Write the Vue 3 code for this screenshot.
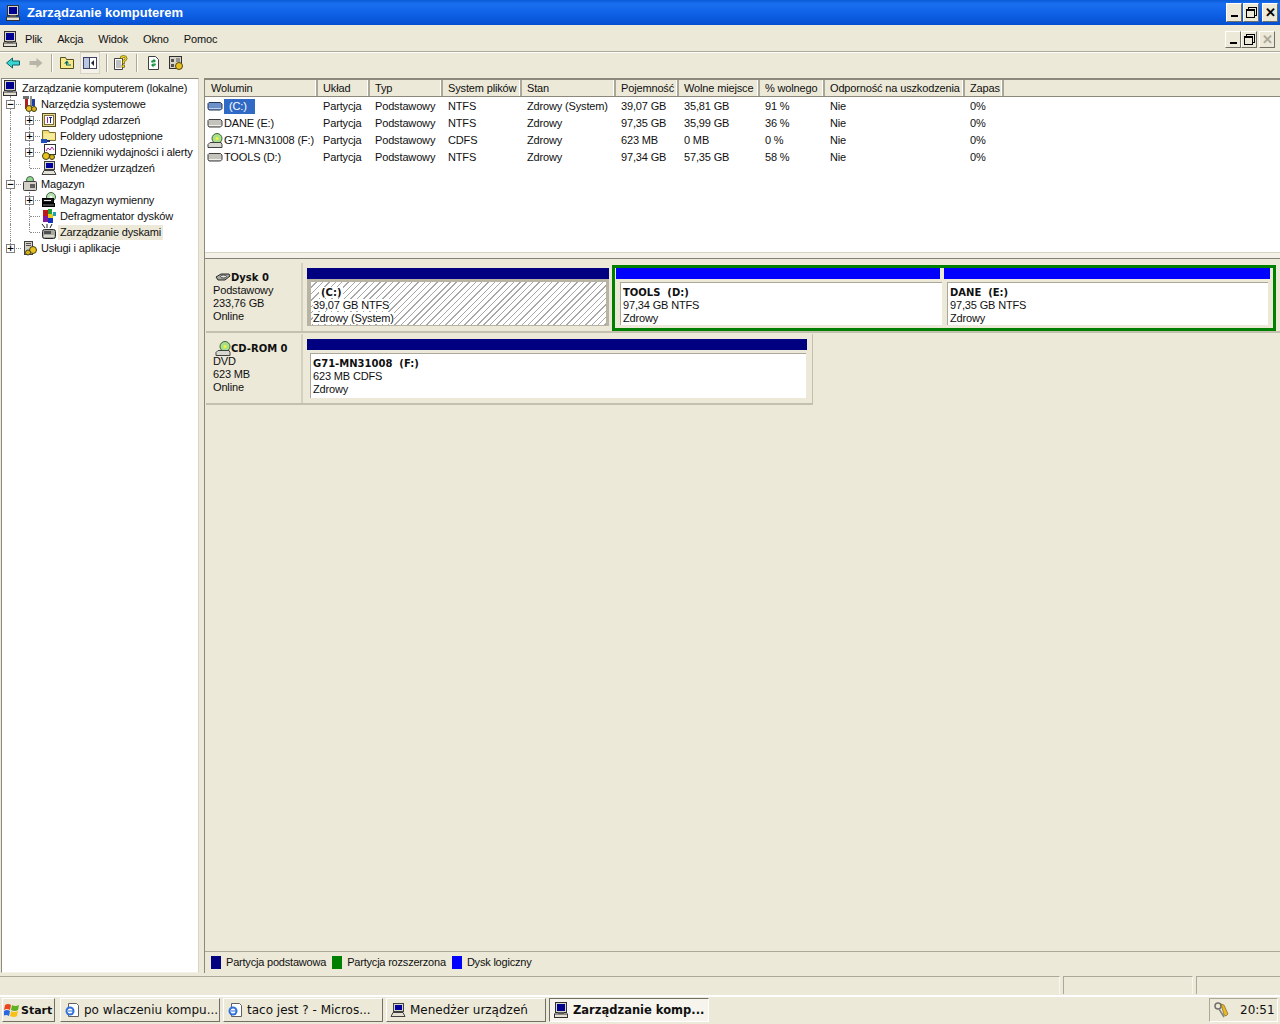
<script setup>
// drzewo konsoli
const treeRows = [
  { label: 'Narzędzia systemowe', icon: 'i-tools', depth: 1, exp: '-', g1: 'v h' },
  { label: 'Podgląd zdarzeń', icon: 'i-event', depth: 2, exp: '+', g1: 'v', g2: 'v h' },
  { label: 'Foldery udostępnione', icon: 'i-share', depth: 2, exp: '+', g1: 'v', g2: 'v h' },
  { label: 'Dzienniki wydajności i alerty', icon: 'i-perf', depth: 2, exp: '+', g1: 'v', g2: 'v h' },
  { label: 'Menedżer urządzeń', icon: 'i-devmgr', depth: 2, g1: 'v', g2: 'e h' },
  { label: 'Magazyn', icon: 'i-storage', depth: 1, exp: '-', g1: 'v h' },
  { label: 'Magazyn wymienny', icon: 'i-removable', depth: 2, exp: '+', g1: 'v', g2: 'v h' },
  { label: 'Defragmentator dysków', icon: 'i-defrag', depth: 2, g1: 'v', g2: 'v h' },
  { label: 'Zarządzanie dyskami', icon: 'i-diskmgmt', depth: 2, g1: 'v', g2: 'e h', active: true },
  { label: 'Usługi i aplikacje', icon: 'i-services', depth: 1, exp: '+', g1: 'e h' }
]

const columns = [
  { title: 'Wolumin', width: 113 },
  { title: 'Układ', width: 52 },
  { title: 'Typ', width: 73 },
  { title: 'System plików', width: 79 },
  { title: 'Stan', width: 94 },
  { title: 'Pojemność', width: 63 },
  { title: 'Wolne miejsce', width: 81 },
  { title: '% wolnego', width: 65 },
  { title: 'Odporność na uszkodzenia', width: 140 },
  { title: 'Zapas', width: 39 }
]

const volumes = [
  { name: '(C:)', icon: 'i-drive-sel', selected: true, cells: ['Partycja', 'Podstawowy', 'NTFS', 'Zdrowy (System)', '39,07 GB', '35,81 GB', '91 %', 'Nie', '0%'] },
  { name: 'DANE (E:)', icon: 'i-drive', cells: ['Partycja', 'Podstawowy', 'NTFS', 'Zdrowy', '97,35 GB', '35,99 GB', '36 %', 'Nie', '0%'] },
  { name: 'G71-MN31008 (F:)', icon: 'i-cd', cells: ['Partycja', 'Podstawowy', 'CDFS', 'Zdrowy', '623 MB', '0 MB', '0 %', 'Nie', '0%'] },
  { name: 'TOOLS (D:)', icon: 'i-drive', cells: ['Partycja', 'Podstawowy', 'NTFS', 'Zdrowy', '97,34 GB', '57,35 GB', '58 %', 'Nie', '0%'] }
]

const menus = ['Plik', 'Akcja', 'Widok', 'Okno', 'Pomoc']

const legend = [
  { label: 'Partycja podstawowa', color: '#000080' },
  { label: 'Partycja rozszerzona', color: '#008000' },
  { label: 'Dysk logiczny', color: '#0000ff' }
]

const tasks = [
  { label: 'po wlaczeniu kompu...', icon: 'i-ie' },
  { label: 'taco jest ? - Micros...', icon: 'i-ie' },
  { label: 'Menedżer urządzeń', icon: 'i-devmgr' },
  { label: 'Zarządzanie komp...', icon: 'i-comp', active: true }
]
</script>

<template>
  <div class="desktop">
    <!-- ikony -->
    <svg class="defs" width="0" height="0">
      <symbol id="i-comp" viewBox="0 0 16 16">
        <rect x="2.5" y="0.5" width="11" height="10" fill="#d8d4c8" stroke="#303030" />
        <rect x="4" y="2" width="8" height="7" fill="#000090" />
        <rect x="5" y="10.500" width="6" height="1.500" fill="#808080" />
        <rect x="1.5" y="12" width="13" height="3.500" fill="#e4e0d4" stroke="#303030" />
      </symbol>
      <symbol id="i-tools" viewBox="0 0 16 16">
        <rect x="3" y="1" width="3" height="12" fill="#b02020" />
        <rect x="1" y="0" width="6" height="3" fill="#707070" />
        <rect x="8" y="0" width="2" height="11" fill="#909090" />
        <rect x="10" y="3" width="3" height="7" fill="#2040a0" />
        <circle cx="7" cy="12.500" r="3" fill="#e8c020" stroke="#404010" />
        <circle cx="12" cy="13" r="2.500" fill="#d8b020" stroke="#404010" />
      </symbol>
      <symbol id="i-event" viewBox="0 0 16 16">
        <rect x="1.500" y="1.500" width="13" height="13" fill="#e8d890" stroke="#504820" />
        <rect x="3.500" y="3.500" width="9" height="9" fill="#fff" stroke="#807040" />
        <rect x="6" y="5" width="1" height="6" fill="#a020a0" />
        <rect x="8" y="5" width="3" height="1" fill="#2020a0" />
        <rect x="9" y="5" width="1" height="6" fill="#2020a0" />
      </symbol>
      <symbol id="i-share" viewBox="0 0 16 16">
        <path d="M1.500 2.500h6l1 2h6v8h-13z" fill="#f0dc70" stroke="#807030" />
        <rect x="3" y="5.500" width="11" height="6" fill="#f8ec98" />
        <path d="M0 11h6v4H0z" fill="#2050c0" />
        <path d="M6 12h3v2H6z" fill="#203060" />
      </symbol>
      <symbol id="i-perf" viewBox="0 0 16 16">
        <rect x="3.500" y="0.500" width="11" height="10" fill="#fff" stroke="#303030" />
        <path d="M5 7l2-3 2 2 2-3 2 3" fill="none" stroke="#b020b0" />
        <circle cx="5" cy="12" r="3.500" fill="#e8c020" stroke="#404010" />
        <circle cx="11" cy="13" r="2.500" fill="#d8b020" stroke="#404010" />
      </symbol>
      <symbol id="i-devmgr" viewBox="0 0 16 16">
        <rect x="3.500" y="1.500" width="10" height="8" fill="#d8d4c8" stroke="#404040" />
        <rect x="5" y="3" width="7" height="5" fill="#0000a0" />
        <path d="M3 10.500h10l2 4H1z" fill="#e4e0d4" stroke="#404040" />
      </symbol>
      <symbol id="i-storage" viewBox="0 0 16 16">
        <circle cx="8" cy="4" r="3.500" fill="#90d890" stroke="#506050" />
        <rect x="1.500" y="5.500" width="13" height="9" rx="1" fill="#d4d0c8" stroke="#404040" />
        <rect x="8" y="8" width="5" height="4" fill="#606060" />
      </symbol>
      <symbol id="i-removable" viewBox="0 0 16 16">
        <circle cx="10" cy="5" r="4.500" fill="#b8e0b0" stroke="#406040" />
        <circle cx="10" cy="5" r="1.300" fill="#fff" />
        <rect x="1.500" y="6.500" width="11" height="4" fill="#181818" stroke="#000" />
        <rect x="3" y="8" width="7" height="1" fill="#e8e8e8" />
        <rect x="1.500" y="11.500" width="12" height="3" fill="#404040" stroke="#000" />
      </symbol>
      <symbol id="i-defrag" viewBox="0 0 16 16">
        <rect x="2" y="2" width="5" height="6" fill="#c01818" />
        <rect x="7" y="1" width="4" height="5" fill="#20a030" />
        <rect x="7" y="6" width="5" height="4" fill="#e8c810" />
        <rect x="2" y="8" width="5" height="6" fill="#8018a0" />
        <rect x="7" y="10" width="5" height="5" fill="#1830c0" />
        <rect x="12" y="4" width="3" height="4" fill="#18a0c0" />
      </symbol>
      <symbol id="i-diskmgmt" viewBox="0 0 16 16">
        <path d="M1 0l3 4M6 0v4M11 0l-2 4" stroke="#202020" fill="none" />
        <rect x="1.500" y="5.500" width="13" height="9" rx="2" fill="#a8a8a0" stroke="#282828" />
        <rect x="3" y="7" width="7" height="3" fill="#505050" />
        <rect x="3" y="11" width="10" height="2" fill="#d8d8d0" />
      </symbol>
      <symbol id="i-services" viewBox="0 0 16 16">
        <rect x="2.500" y="1.500" width="8" height="13" fill="#d4d0c8" stroke="#404040" />
        <rect x="4" y="3" width="5" height="1" fill="#505050" />
        <rect x="4" y="5" width="5" height="1" fill="#505050" />
        <circle cx="11" cy="10" r="3.500" fill="#e8c020" stroke="#404010" />
        <circle cx="6" cy="12.500" r="2.500" fill="#d8b020" stroke="#404010" />
      </symbol>
      <symbol id="i-drive" viewBox="0 0 16 16">
        <path d="M2 3.500h11.500l1.500 1.500v4.500l-1.500 1.500H2L1 9.500V4.500z" fill="#c4c4bc" stroke="#404040" />
        <rect x="2" y="9" width="12" height="1" fill="#f0f0e8" />
      </symbol>
      <symbol id="i-drive-sel" viewBox="0 0 16 16">
        <path d="M2 3.500h11.500l1.500 1.500v4.500l-1.500 1.500H2L1 9.500V4.500z" fill="#6e90c8" stroke="#283858" />
        <rect x="2" y="9" width="12" height="1" fill="#c0d0f0" />
      </symbol>
      <symbol id="i-cd" viewBox="0 0 16 16">
        <circle cx="10" cy="5.500" r="5" fill="#a8e088" stroke="#406040" />
        <circle cx="10" cy="5.500" r="1.500" fill="#f8f040" />
        <path d="M3 9.500h11l1 2v3H1v-3z" fill="#d8d8d0" stroke="#404040" />
      </symbol>
      <symbol id="i-hdd" viewBox="0 0 16 16">
        <path d="M1 7l5-3h8l1 2-5 4H3z" fill="#a8a8a0" stroke="#282828" />
        <ellipse cx="8.500" cy="6.500" rx="3" ry="1.500" fill="#e8e8e0" stroke="#404040" />
      </symbol>
      <symbol id="i-ie" viewBox="0 0 16 16">
        <path d="M4.500 1.500h8l2 2v11h-10z" fill="#fff" stroke="#606060" />
        <circle cx="6" cy="9" r="4.500" fill="#3070d8" />
        <circle cx="6" cy="9" r="2.500" fill="#fff" />
        <rect x="4" y="8.500" width="5" height="1" fill="#3070d8" />
      </symbol>
      <symbol id="i-back" viewBox="0 0 16 16">
        <path d="M1.500 8l6-5v3h7v4h-7v3z" fill="#38d8d0" stroke="#10606a" />
      </symbol>
      <symbol id="i-fwd" viewBox="0 0 16 16">
        <path d="M14.500 8l-6-5v3h-7v4h7v3z" fill="#b8b4a8" />
      </symbol>
      <symbol id="i-up" viewBox="0 0 16 16">
        <path d="M1.500 2.500h5l1 2h7v9h-13z" fill="#f8e888" stroke="#505020" />
        <path d="M8 5.500l-3 3h2v2h5v-1H8v-1h2z" fill="#006868" />
      </symbol>
      <symbol id="i-tree" viewBox="0 0 16 16">
        <rect x="1.500" y="2.500" width="13" height="11" fill="#fff" stroke="#404060" />
        <rect x="2" y="3" width="5" height="10" fill="#b8c8e0" />
        <rect x="7" y="3" width="1" height="10" fill="#404060" />
        <path d="M12 5v6l-3-3z" fill="#202040" />
      </symbol>
      <symbol id="i-help" viewBox="0 0 16 16">
        <path d="M1.500 3.500h8v11h-8z" fill="#fff" stroke="#404040" />
        <path d="M3 6h5M3 8h5M3 10h5M3 12h5" stroke="#808080" />
        <path d="M7 3.500q0-3 3.500-3t3.500 3q0 2-2.500 3v2h-2v-3q2.500-.5 2.500-2t-1.500-1-1.500 1z" fill="#f8e020" stroke="#605000" stroke-width=".7" />
        <rect x="9" y="10" width="2.500" height="2.500" fill="#f8e020" stroke="#605000" stroke-width=".7" />
      </symbol>
      <symbol id="i-refresh" viewBox="0 0 16 16">
        <path d="M3.500 1.500h7l3 3v10h-10z" fill="#fff" stroke="#404040" />
        <path d="M6 7q0-2 2.500-2V3.500L11 6 8.500 8V6.500Q7.500 6.500 7.500 8zM11 9q0 2-2.500 2v1.500L6 10l2.500-2v1.500q1 0 1-1.500z" fill="#109040" />
      </symbol>
      <symbol id="i-props" viewBox="0 0 16 16">
        <rect x="1.500" y="1.500" width="12" height="12" fill="#d8d4c8" stroke="#303030" />
        <path d="M3 4h3v3H3zM3 9h3v3H3z" fill="#505050" />
        <path d="M8 4h4M8 6h4" stroke="#505050" />
        <circle cx="11" cy="11" r="3.500" fill="#e8c020" stroke="#504810" />
      </symbol>
      <symbol id="i-flag" viewBox="0 0 16 16">
        <path d="M1 3q3-2 6 0l-1 5q-3-2-6 0z" fill="#e84820" />
        <path d="M8 3q3 2 7 0l-1 5q-3 2-7 0z" fill="#60b020" />
        <path d="M0 9q3-2 6 0l-1 5q-3-2-6 0z" fill="#2868e0" />
        <path d="M7 9q3 2 7 0l-1 5q-3 2-7 0z" fill="#f8c018" />
      </symbol>
      <symbol id="i-keys" viewBox="0 0 16 16">
        <circle cx="5" cy="4" r="3" fill="none" stroke="#707070" stroke-width="1.500" />
        <path d="M6 7l5 8" stroke="#808080" stroke-width="1.500" />
        <path d="M8 2l3 1 4 9-2 2-2-1z" fill="#e8b828" stroke="#705810" stroke-width=".6" />
      </symbol>
    </svg>

    <header class="titlebar">
      <svg class="ico"><use href="#i-comp" /></svg>
      <span class="title-text">Zarządzanie komputerem</span>
      <div class="win-btns">
        <button class="cap"><span class="g-min"></span></button>
        <button class="cap"><span class="g-max"></span></button>
        <button class="cap close">✕</button>
      </div>
    </header>

    <div class="menubar">
      <svg class="ico"><use href="#i-comp" /></svg>
      <div class="menus">
        <span v-for="m in menus" :key="m">{{ m }}</span>
      </div>
      <div class="mdi-btns">
        <button class="cap small"><span class="g-min"></span></button>
        <button class="cap small"><span class="g-max"></span></button>
        <button class="cap small off">✕</button>
      </div>
    </div>

    <div class="toolbar">
      <svg class="ico"><use href="#i-back" /></svg>
      <svg class="ico"><use href="#i-fwd" /></svg>
      <i class="t-sep"></i>
      <svg class="ico"><use href="#i-up" /></svg>
      <span class="t-on"><svg class="ico"><use href="#i-tree" /></svg></span>
      <i class="t-sep"></i>
      <svg class="ico t-help"><use href="#i-help" /></svg>
      <i class="t-sep"></i>
      <svg class="ico t-refresh"><use href="#i-refresh" /></svg>
      <svg class="ico"><use href="#i-props" /></svg>
    </div>

    <main class="main">
      <aside class="tree">
        <div class="tree-row root">
          <svg class="ico"><use href="#i-comp" /></svg>
          <span class="tree-label">Zarządzanie komputerem (lokalne)</span>
        </div>
        <div v-for="row in treeRows" :key="row.label" class="tree-row">
          <span class="cell" :class="row.g1">
            <b v-if="row.depth === 1 && row.exp" class="exp">{{ row.exp === '-' ? '−' : '+' }}</b>
          </span>
          <span v-if="row.depth === 2" class="cell" :class="row.g2">
            <b v-if="row.exp" class="exp">+</b>
          </span>
          <svg class="ico tree-ico"><use :href="'#' + row.icon" /></svg>
          <span class="tree-label" :class="{ active: row.active }">{{ row.label }}</span>
        </div>
      </aside>

      <section class="content">
        <div class="list">
          <div class="list-head">
            <span v-for="c in columns" :key="c.title" class="th" :style="{ width: c.width + 'px' }">{{ c.title }}</span>
          </div>
          <div v-for="v in volumes" :key="v.name" class="list-row">
            <span class="td first" :style="{ width: columns[0].width + 'px' }">
              <svg class="ico"><use :href="'#' + v.icon" /></svg>
              <span class="vol-name" :class="{ selected: v.selected }">{{ v.name }}</span>
            </span>
            <span
              v-for="(cell, i) in v.cells"
              :key="i"
              class="td"
              :style="{ width: columns[i + 1].width + 'px' }"
            >{{ cell }}</span>
          </div>
        </div>

        <div class="splitter"></div>

        <div class="graph">
          <div class="disk-row">
            <div class="disk-info">
              <div class="disk-name"><svg class="ico"><use href="#i-hdd" /></svg>Dysk 0</div>
              <div>Podstawowy</div>
              <div>233,76 GB</div>
              <div>Online</div>
            </div>
            <div class="part part-c">
              <div class="bar navy"></div>
              <div class="part-body hatch">
                <div><strong class="c-label">(C:)</strong></div>
                <div><span class="white">39,07 GB NTFS</span></div>
                <div><span class="white">Zdrowy (System)</span></div>
              </div>
            </div>
            <div class="extended">
              <div class="part part-tools">
                <div class="bar blue"></div>
                <div class="part-body">
                  <strong>TOOLS&nbsp; (D:)</strong>
                  <div>97,34 GB NTFS</div>
                  <div>Zdrowy</div>
                </div>
              </div>
              <div class="part part-dane">
                <div class="bar blue"></div>
                <div class="part-body">
                  <strong>DANE&nbsp; (E:)</strong>
                  <div>97,35 GB NTFS</div>
                  <div>Zdrowy</div>
                </div>
              </div>
            </div>
          </div>

          <div class="disk-row cd-row">
            <div class="disk-info">
              <div class="disk-name"><svg class="ico"><use href="#i-cd" /></svg>CD-ROM 0</div>
              <div>DVD</div>
              <div>623 MB</div>
              <div>Online</div>
            </div>
            <div class="part part-cd">
              <div class="bar navy"></div>
              <div class="part-body">
                <strong>G71-MN31008&nbsp; (F:)</strong>
                <div>623 MB CDFS</div>
                <div>Zdrowy</div>
              </div>
            </div>
          </div>
        </div>

        <div class="legend">
          <span v-for="l in legend" :key="l.label" class="legend-item">
            <i class="swatch" :style="{ background: l.color }"></i>{{ l.label }}
          </span>
        </div>
      </section>
    </main>

    <div class="statusbar">
      <div class="seg seg-main"></div>
      <div class="seg seg-mid"></div>
      <div class="seg seg-end"></div>
    </div>

    <footer class="taskbar">
      <button class="start">
        <svg class="ico"><use href="#i-flag" /></svg>Start
      </button>
      <i class="grip"></i>
      <div class="tasks">
        <button v-for="t in tasks" :key="t.label" class="task" :class="{ active: t.active }">
          <svg class="ico"><use :href="'#' + t.icon" /></svg>
          <span>{{ t.label }}</span>
        </button>
      </div>
      <div class="tray">
        <svg class="ico"><use href="#i-keys" /></svg>
        <span>20:51</span>
      </div>
    </footer>
  </div>
</template>

<style scoped>
.defs {
  position: absolute;
}

.desktop {
  width: 1280px;
  height: 1024px;
  display: flex;
  flex-direction: column;
  overflow: hidden;
  background: #ece9d8;
  color: #101010;
  font: 11px/13px "Liberation Sans", Arial, sans-serif;
  letter-spacing: -0.15px;
}

.ico {
  width: 16px;
  height: 16px;
  flex: none;
  display: block;
}

button {
  padding: 0;
  font: inherit;
  color: inherit;
}

/* pasek tytulu */
.titlebar {
  height: 25px;
  flex: none;
  display: flex;
  align-items: center;
  padding-left: 5px;
  background: linear-gradient(180deg, #0a5ad6 0%, #1a6ff0 15%, #0d5fe4 60%, #0650d0 100%);
  color: #fff;
}

.title-text {
  margin-left: 6px;
  font: bold 13px "Liberation Sans", sans-serif;
  letter-spacing: 0;
}

.win-btns {
  margin-left: auto;
  margin-right: 2px;
  display: flex;
  gap: 1px;
}

.cap {
  width: 16px;
  height: 19px;
  position: relative;
  display: flex;
  align-items: center;
  justify-content: center;
  background: #ece9d8;
  border: 1px solid;
  border-color: #fff #716f64 #716f64 #fff;
  color: #000;
  font-weight: bold;
  font-size: 13px;
}

.cap.close {
  margin-left: 2px;
}

.cap.small {
  height: 17px;
}

.cap.off {
  margin-left: 2px;
  color: #aca899;
}

.g-min {
  width: 7px;
  height: 2px;
  margin-top: 7px;
  background: #000;
}

.g-max {
  width: 7px;
  height: 6px;
  margin: 2px 0 0 -2px;
  border: 1px solid #000;
  border-top-width: 2px;
  box-shadow: 2px -2px 0 -1px #ece9d8, 2px -2px 0 0 #000;
}

/* menu */
.menubar {
  height: 24px;
  flex: none;
  display: flex;
  align-items: center;
  padding: 2px 5px 0 2px;
  border-bottom: 1px solid #aca899;
}

.menus {
  display: flex;
  gap: 15px;
  margin-left: 7px;
}

.mdi-btns {
  margin-left: auto;
  display: flex;
}

/* toolbar */
.toolbar {
  height: 20px;
  flex: none;
  display: flex;
  align-items: center;
  padding: 0 0 5px 5px;
  gap: 7px;
  border-top: 1px solid #fff;
}

.t-sep {
  width: 1px;
  height: 18px;
  background: #aca899;
  box-shadow: 1px 0 0 #fff;
}

.t-on {
  padding: 2px 1px;
  margin: 0 -1px 0 -2px;
  background: #f4f2e8;
  border: 1px solid #d8d4c4;
}

.t-help {
  margin-left: -1px;
}

.t-refresh {
  margin-left: 1px;
}

/* glowny uklad */
.main {
  height: 895px;
  flex: none;
  display: flex;
}

.tree {
  width: 196px;
  margin-left: 1px;
  flex: none;
  padding: 1px 0 0;
  background: #fff;
  border: 1px solid #8c897c;
  border-right-color: #d8d4c4;
  border-bottom-color: #f4f2e8;
}

.tree-row {
  height: 16px;
  display: flex;
  align-items: center;
}

.root .tree-label {
  margin-left: 3px;
  padding-left: 1px;
}

.cell {
  width: 19px;
  height: 16px;
  flex: none;
  position: relative;
}

.cell.v::before,
.cell.e::before {
  content: "";
  position: absolute;
  left: 8px;
  top: 0;
  bottom: 0;
  border-left: 1px dotted #8c8c8c;
}

.cell.e::before {
  bottom: 8px;
}

.cell.h::after {
  content: "";
  position: absolute;
  left: 9px;
  top: 8px;
  width: 10px;
  border-top: 1px dotted #8c8c8c;
}

.exp {
  position: absolute;
  z-index: 1;
  left: 4px;
  top: 4px;
  width: 9px;
  height: 9px;
  box-sizing: border-box;
  display: flex;
  align-items: center;
  justify-content: center;
  background: #fff;
  border: 1px solid #808080;
  font: bold 9px/7px "DejaVu Sans", sans-serif;
  color: #000;
}

.tree-ico {
  margin-left: 1px;
}

.tree-label {
  margin-left: 1px;
  padding: 1px 2px;
  white-space: nowrap;
}

.tree-label.active {
  background: #ece9d8;
}

.content {
  flex: 1;
  min-width: 0;
  display: flex;
  flex-direction: column;
  margin-left: 5px;
  border: 1px solid #8c897c;
  border-right: 0;
  border-bottom: 0;
  border-top-width: 2px;
}

/* lista woluminow */
.list {
  height: 172px;
  flex: none;
  background: #fff;
}

.list-head {
  height: 16px;
  display: flex;
  margin-bottom: 1px;
  background: #ece9d8;
  border-bottom: 1px solid #8c897c;
}

.th {
  box-sizing: border-box;
  padding-left: 5px;
  line-height: 17px;
  white-space: nowrap;
  border-right: 2px solid #aca899;
  box-shadow: inset -1px 0 0 #fff;
}

.th:first-child {
  padding-left: 6px;
}

.list-row {
  height: 17px;
  display: flex;
  align-items: center;
}

.td {
  box-sizing: border-box;
  padding-left: 5px;
  white-space: nowrap;
}

.td.first {
  display: flex;
  align-items: center;
  padding-left: 2px;
}

.vol-name {
  padding: 1px 0 1px 1px;
}

.vol-name.selected {
  padding: 1px 8px 1px 5px;
  margin-left: 1px;
  background: #316ac5;
  color: #fff;
}

.splitter {
  height: 5px;
  flex: none;
  border-top: 1px solid #d8d4c4;
  border-bottom: 1px solid #808078;
  background: #f4f2e8;
}

/* widok graficzny */
.graph {
  flex: 1;
  padding-top: 4px;
  padding-left: 1px;
}

.disk-row {
  height: 68px;
  display: flex;
  align-items: flex-start;
  border-bottom: 2px solid #c4c0b0;
}

.cd-row {
  width: 606px;
  height: 69px;
  margin-top: 1px;
  border-right: 1px solid #c4c0b0;
}

.disk-info {
  width: 97px;
  height: 100%;
  flex: none;
  box-sizing: border-box;
  padding: 8px 0 0 7px;
  border-right: 2px solid #d4d0c0;
  margin-right: 2px;
}

.disk-name {
  display: flex;
  align-items: center;
  height: 13px;
  margin-left: 2px;
  font: bold 10px "DejaVu Sans", sans-serif;
  letter-spacing: 0;
}

.part {
  box-sizing: border-box;
  flex: none;
}

.bar {
  height: 11px;
}

.bar.navy {
  background: #000080;
}

.bar.blue {
  background: #0000ff;
}

.part-body {
  box-sizing: border-box;
  height: 43px;
  margin-top: 3px;
  padding: 3px 0 0 2px;
  background: #fff;
  border-top: 1px solid #aca899;
  border-left: 1px solid #aca899;
  white-space: nowrap;
}

.part-body strong {
  font: bold 10px/13px "DejaVu Sans", sans-serif;
  letter-spacing: 0;
}

.part-c {
  width: 302px;
  height: 58px;
  margin: 5px 0 0 2px;
  background: #b8b4a4;
}

.part-c .part-body {
  margin: 3px 3px 0 4px;
  padding: 4px 0 0 2px;
  border: 0;
}

.hatch {
  background: repeating-linear-gradient(135deg, #fff 0, #fff 3.5px, #a8a8a8 3.5px, #a8a8a8 4.500px);
}

.c-label {
  margin-left: 6px;
  padding: 0 2px;
  background: #fff;
}

.white {
  background: #fff;
}

.extended {
  width: 664px;
  height: 66px;
  box-sizing: border-box;
  margin: 2px 0 0 3px;
  display: flex;
  border: 3px solid #008000;
  padding-left: 1px;
}

.part-tools {
  width: 328px;
}

.part-tools .bar {
  margin-right: 4px;
}

.part-tools .part-body {
  margin: 3px 2px 0 4px;
}

.part-dane {
  width: 326px;
}

.part-dane .part-body {
  margin: 3px 2px 0 3px;
}

.part-cd {
  width: 500px;
  margin: 5px 0 0 2px;
}

.part-cd .part-body {
  height: 45px;
  margin: 3px 1px 0 3px;
}

/* legenda */
.legend {
  height: 21px;
  flex: none;
  display: flex;
  align-items: center;
  gap: 6px;
  padding-left: 6px;
  border-top: 1px solid #aca899;
  letter-spacing: -0.2px;
}

.legend-item {
  display: flex;
  align-items: center;
}

.swatch {
  width: 10px;
  height: 13px;
  margin-right: 5px;
}

/* status */
.statusbar {
  height: 18px;
  flex: none;
  display: flex;
  gap: 3px;
  margin-top: 3px;
}

.seg {
  border-top: 1px solid #aca899;
  border-right: 1px solid #f8f6ee;
}

.seg-main {
  width: 1059px;
}

.seg-mid {
  width: 128px;
  border-left: 1px solid #aca899;
}

.seg-end {
  flex: 1;
  border-left: 1px solid #aca899;
  border-right: 0;
}

/* pasek zadan */
.taskbar {
  height: 29px;
  flex: none;
  margin-top: 1px;
  display: flex;
  align-items: flex-start;
  padding: 1px 2px 0;
  box-sizing: border-box;
  border-top: 2px solid #fff;
  font: 12px "DejaVu Sans", sans-serif;
  letter-spacing: 0;
}

.start {
  width: 53px;
  height: 24px;
  flex: none;
  display: flex;
  align-items: center;
  gap: 1px;
  padding-left: 1px;
  background: #ece9d8;
  border: 1px solid;
  border-color: #fff #716f64 #716f64 #fff;
  font: bold 11px "DejaVu Sans", sans-serif;
}

.grip {
  width: 5px;
}

.tasks {
  display: flex;
  gap: 3px;
}

.task {
  width: 160px;
  height: 24px;
  display: flex;
  align-items: center;
  gap: 4px;
  padding-left: 3px;
  background: #ece9d8;
  border: 1px solid;
  border-color: #fff #716f64 #716f64 #fff;
  white-space: nowrap;
}

.task.active {
  border-color: #716f64 #fff #fff #716f64;
  background: #f6f4ec;
  font-weight: bold;
  font-size: 11.5px;
}

.tray {
  margin-left: auto;
  width: 69px;
  height: 24px;
  box-sizing: border-box;
  display: flex;
  align-items: center;
  gap: 11px;
  padding-left: 3px;
  border: 1px solid;
  border-color: #aca899 #fff #fff #aca899;
}
</style>

<style>
html, body {
  margin: 0;
  background: #ece9d8;
}
</style>
